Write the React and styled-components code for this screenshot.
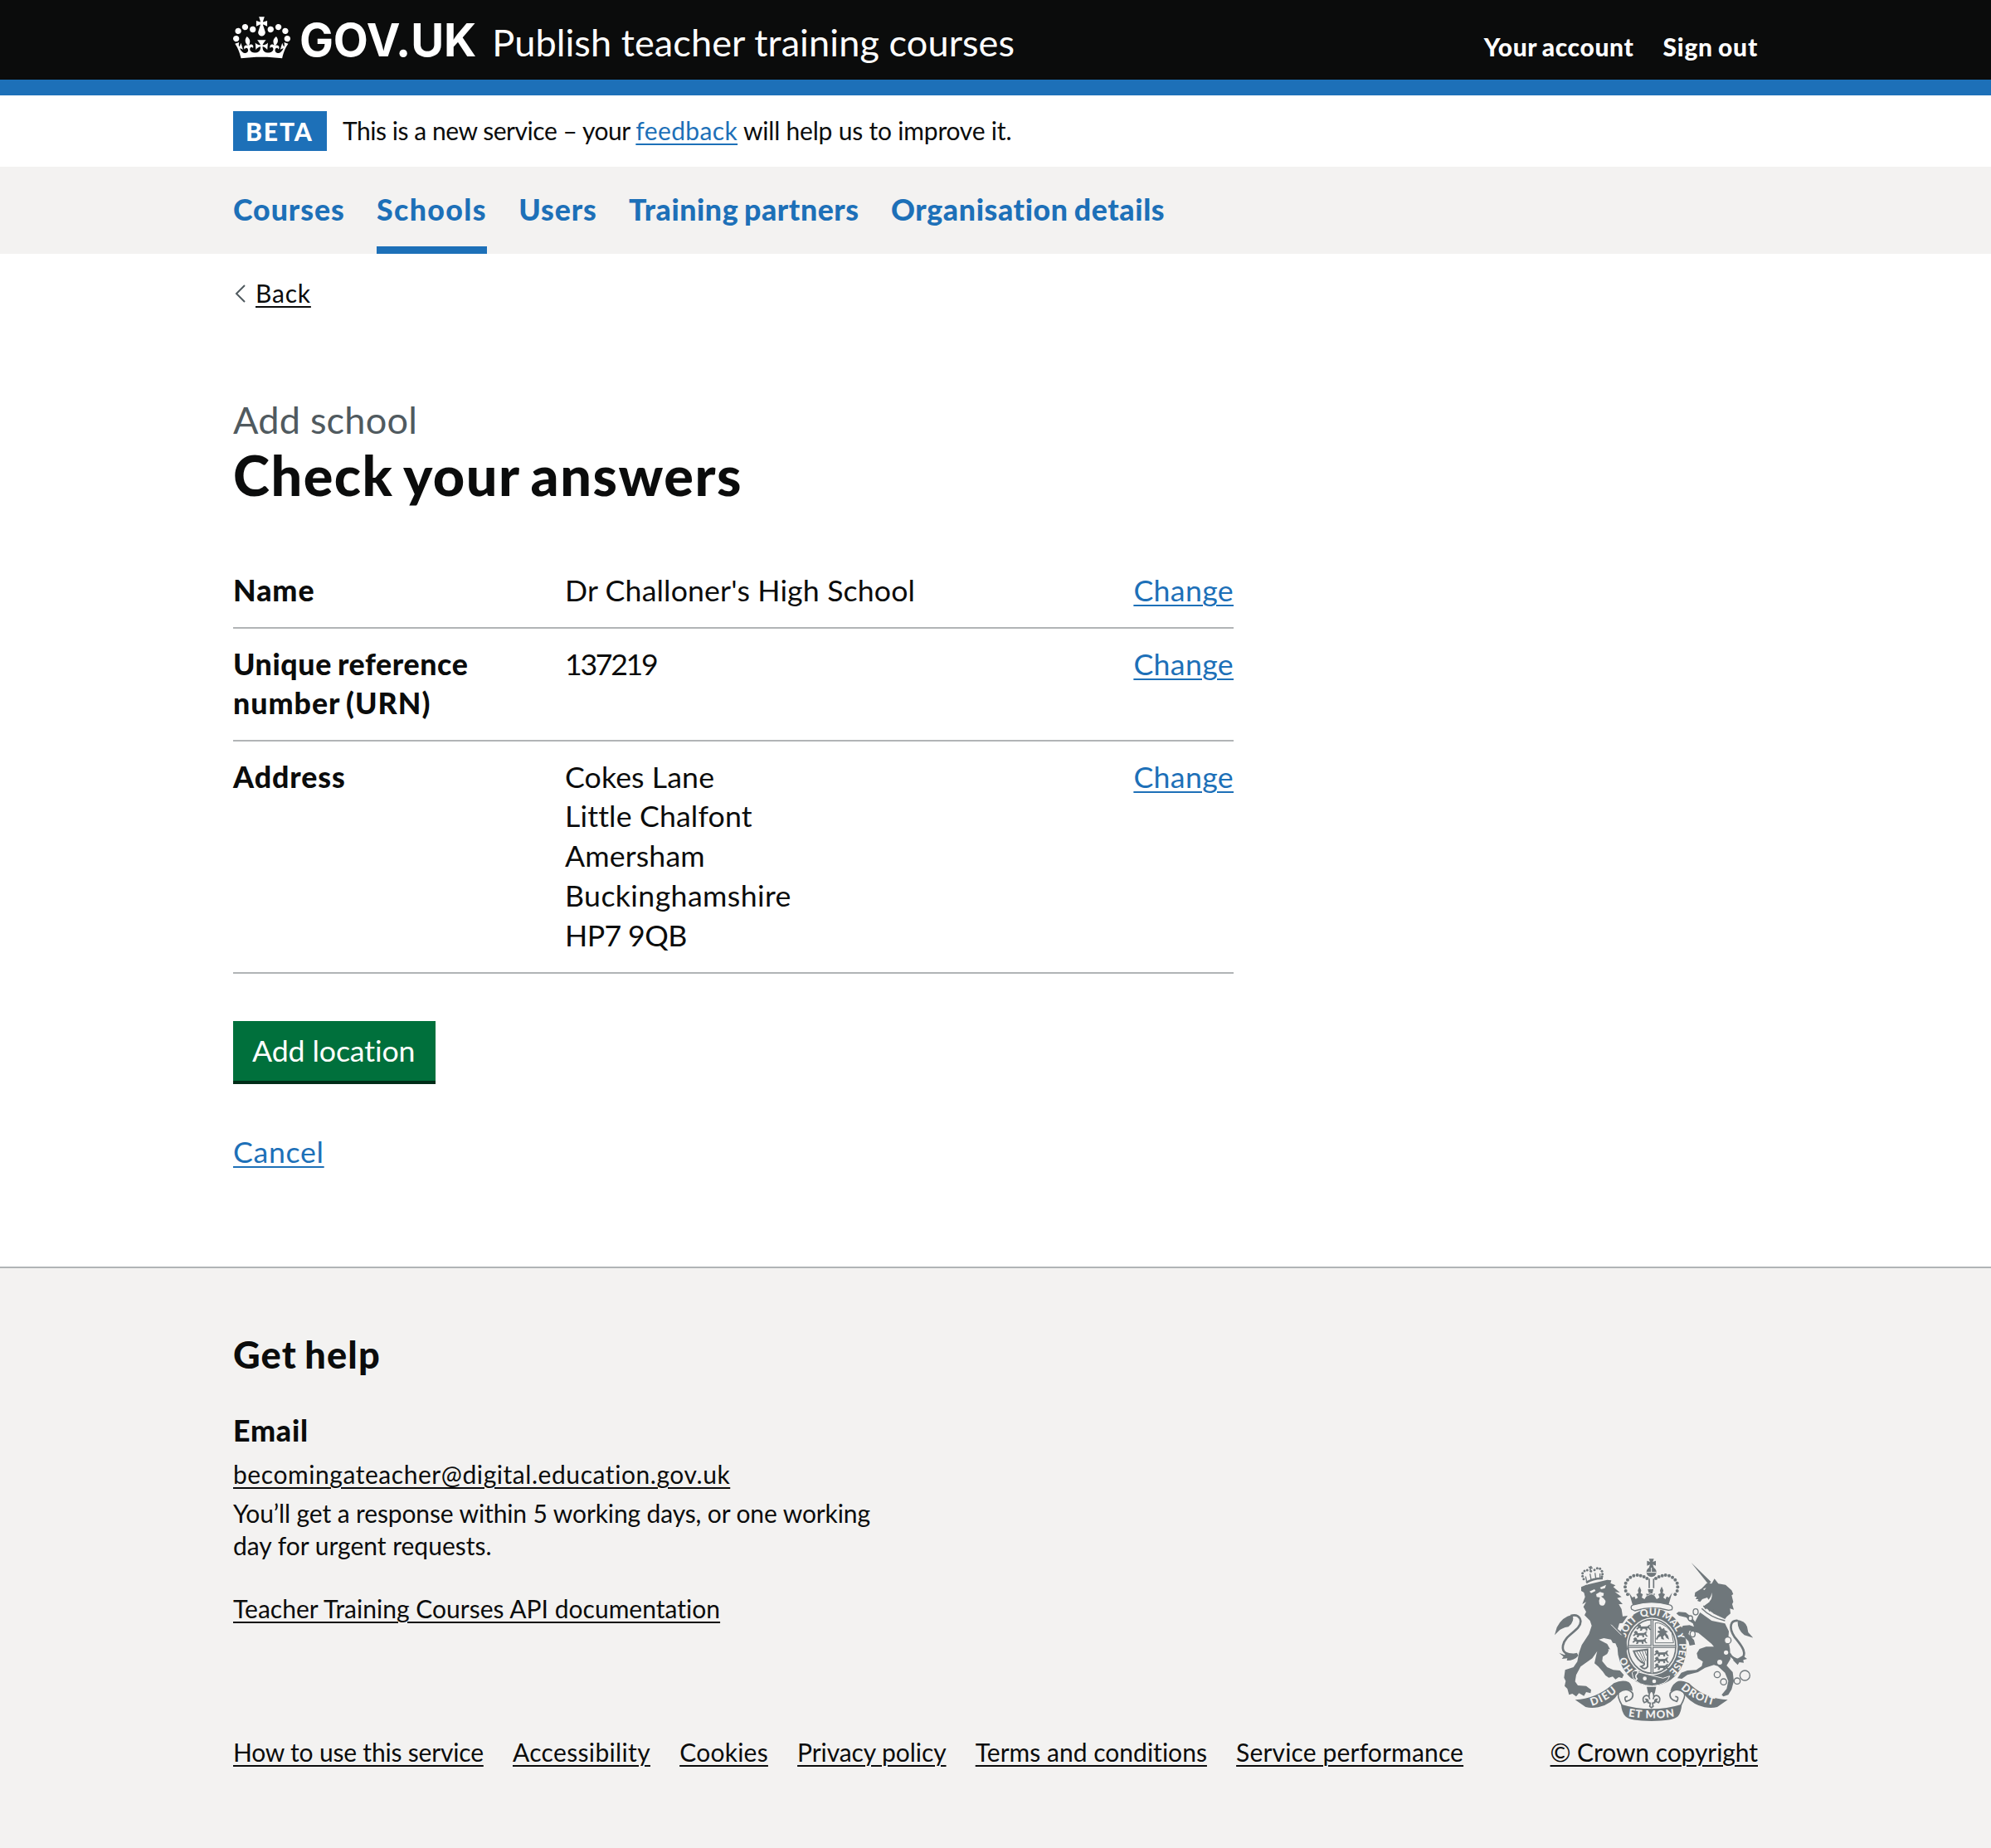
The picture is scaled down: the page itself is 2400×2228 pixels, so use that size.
import React from "react";
import styled, { createGlobalStyle } from "styled-components";

const ink = "#0b0c0c";
const blue = "#1d70b8";
const grey = "#f3f2f1";
const rule = "#b1b4b6";

const GlobalStyle = createGlobalStyle`
  *, *::before, *::after { box-sizing: border-box; }
  html { background: ${grey}; }
  body {
    margin: 0;
    background: #fff;
    color: ${ink};
    font-family: Lato, "Noto Sans", sans-serif;
    font-size: 35.7px;
    line-height: 47.9px;
    overflow-x: hidden;
  }
`;

const Container = styled.div`
  width: 1838px;
  margin: 0 auto;
`;

/* Inline run of text with its own tracking. */
const Run = styled.span`
  letter-spacing: ${(p) => p.$track ?? 0}px;
`;

const Link = styled.a`
  color: ${(p) => (p.$plain ? ink : blue)};
  letter-spacing: ${(p) => p.$track ?? 0}px;
  text-decoration: underline;
  text-decoration-thickness: 2px;
  text-underline-offset: 4px;
  white-space: nowrap;
`;

/* ---------- header ---------- */
const Header = styled.header`
  background: ${ink};
  border-bottom: 19px solid ${blue};
  height: 115px;
  color: #fff;
`;

const HeaderRow = styled(Container)`
  display: flex;
  align-items: baseline;
  padding-top: 20px;
  line-height: 57px;
`;

const Crown = styled.svg`
  width: 69px;
  height: 51px;
  align-self: flex-start;
  fill: currentColor;
`;

const Wordmark = styled.span`
  margin-left: 11px;
  font-family: Inter, "Liberation Sans", sans-serif;
  font-weight: 700;
  font-size: 54.6px;
  letter-spacing: -0.1px;
`;

const ServiceName = styled.span`
  margin-left: 19px;
  font-size: 45.1px;
  letter-spacing: 0.08px;
`;

const Account = styled.nav`
  display: flex;
  gap: 35px;
  margin-left: auto;
  font-size: 30px;
  font-weight: 900;
  word-spacing: -0.06em;
`;

/* ---------- phase banner ---------- */
const Banner = styled(Container)`
  display: flex;
  align-items: center;
  height: 86px;
  font-size: 30px;
  line-height: 38.3px;
`;

const Tag = styled.strong`
  width: 113px;
  height: 48px;
  padding: 5px 0 0 15px;
  background: ${blue};
  color: #fff;
  font-weight: 900;
  letter-spacing: 1.9px;
`;

const BannerText = styled.span`
  margin-left: 19px;
  padding-bottom: 1px;
  white-space: pre;
`;

/* ---------- primary navigation ---------- */
const NavBar = styled.nav`
  background: ${grey};
`;

const NavList = styled(Container)`
  display: flex;
  gap: 38.3px;
`;

const NavItem = styled.a`
  height: 105px;
  padding-top: 28px;
  border-bottom: 9.5px solid ${(p) => (p.$current ? blue : "transparent")};
  color: ${blue};
  font-weight: 900;
  letter-spacing: ${(p) => p.$track}px;
  word-spacing: -0.06em;
  white-space: nowrap;
`;

/* ---------- main ---------- */
const Main = styled(Container)`
  height: 1221px;
  padding-top: 27.5px;
`;

const BackLink = styled.div`
  display: flex;
  align-items: center;
  height: 38.3px;
  font-size: 30px;
  line-height: 38.3px;
`;

const Chevron = styled.svg`
  width: 13px;
  height: 22px;
  margin: 3px 12px 0 2px;
  fill: none;
  stroke: #505a5f;
  stroke-width: 2;
`;

const Caption = styled.div`
  margin-top: 105.7px;
  color: #505a5f;
  font-size: 45.1px;
  line-height: 57.4px;
  letter-spacing: 0.2px;
`;

const Title = styled.h1`
  margin: 1.5px 0 61.5px;
  font-size: 66.6px;
  font-weight: 900;
  line-height: 72px;
  letter-spacing: 1.5px;
  word-spacing: -0.06em;
`;

const Summary = styled.dl`
  width: 1206px;
  margin: 0 0 57.4px;
`;

const SummaryRow = styled.div`
  display: grid;
  grid-template-columns: 400px 1fr auto;
  padding: 18.6px 0 19.6px;
  border-bottom: 2px solid ${rule};
`;

const Key = styled.dt`
  font-weight: 900;
  word-spacing: -0.06em;
`;

const Value = styled.dd`
  margin: 0;
`;

const Line = styled.div`
  letter-spacing: ${(p) => p.$track ?? 0}px;
`;

const Button = styled.button`
  display: block;
  width: 244px;
  height: 72px;
  margin: 0 0 61.5px;
  padding: 0 0 0 23px;
  border: 0;
  background: #00703c;
  box-shadow: 0 4px 0 #002d18;
  color: #fff;
  font: inherit;
  letter-spacing: -0.1px;
  text-align: left;
  line-height: 47.9px;
`;

/* ---------- footer ---------- */
const Footer = styled.footer`
  height: 701px;
  border-top: 2px solid ${rule};
  background: ${grey};
  font-size: 30px;
  line-height: 38.3px;
`;

const FooterRow = styled(Container)`
  display: flex;
  justify-content: space-between;
  align-items: flex-end;
  padding-top: 75.4px;
`;

const HelpTitle = styled.h2`
  margin: 0 0 38.9px;
  font-size: 45.1px;
  font-weight: 900;
  line-height: 57.4px;
  letter-spacing: 1.2px;
  word-spacing: -0.06em;
`;

const HelpSub = styled.h3`
  margin: 0 0 9.6px;
  font-size: 35.7px;
  font-weight: 900;
  line-height: 47.9px;
  letter-spacing: 0.8px;
`;

const HelpText = styled.p`
  margin: 9px 0 38.4px;
`;

const FooterLinks = styled.div`
  display: flex;
  gap: 35.2px;
  margin-top: 134px;
`;

const Licence = styled.div`
  display: flex;
  flex-direction: column;
  align-items: flex-end;
`;

const CrestSvg = styled.svg`
  width: 239px;
  height: 196px;
  margin: 0 6px 17.5px 0;
`;

const crownPath =
  "M25 30.2c3.5 1.5 7.7-.2 9.1-3.7 1.5-3.6-.2-7.8-3.9-9.2-3.6-1.4-7.6.3-9.1 3.9-1.4 3.5.3 7.5 3.9 9zM9 39.5c3.6 1.5 7.8-.2 9.2-3.7 1.5-3.6-.2-7.8-3.9-9.1-3.6-1.5-7.6.2-9.1 3.8-1.4 3.5.3 7.5 3.8 9zM4.4 57.2c3.5 1.5 7.7-.2 9.1-3.8 1.5-3.6-.2-7.7-3.9-9.1-3.5-1.5-7.6.3-9.1 3.8-1.4 3.5.3 7.6 3.9 9.1zm38.3-21.4c3.5 1.5 7.7-.2 9.1-3.8 1.5-3.6-.2-7.7-3.9-9.1-3.6-1.5-7.6.3-9.1 3.8-1.3 3.6.4 7.7 3.9 9.1zm64.4-5.6c-3.6 1.5-7.8-.2-9.1-3.7-1.5-3.6.2-7.8 3.8-9.2 3.6-1.4 7.7.3 9.2 3.9 1.3 3.5-.4 7.5-3.9 9zm15.9 9.3c-3.6 1.5-7.7-.2-9.1-3.7-1.5-3.6.2-7.8 3.7-9.1 3.6-1.5 7.7.2 9.2 3.8 1.5 3.5-.3 7.5-3.8 9zm4.7 17.7c-3.6 1.5-7.8-.2-9.2-3.8-1.5-3.6.2-7.7 3.9-9.1 3.6-1.5 7.7.3 9.2 3.8 1.3 3.5-.4 7.6-3.9 9.1zM89.3 35.8c-3.6 1.5-7.8-.2-9.2-3.8-1.4-3.6.2-7.7 3.9-9.1 3.6-1.5 7.7.3 9.2 3.8 1.4 3.6-.3 7.7-3.9 9.1zM69.7 17.7l8.9 4.7V9.3l-8.9 2.8c-.2-.3-.5-.6-.9-.9L72.4 0H59.6l3.5 11.2c-.3.3-.6.5-.9.9l-8.8-2.8v13.1l8.8-4.7c.3.3.6.7.9.9l-5 15.4v.1c-.2.8-.4 1.6-.4 2.4 0 4.1 3.1 7.5 7 8.1h.2c.3 0 .7.1 1 .1.4 0 .7 0 1-.1h.2c4-.6 7.1-4.1 7.1-8.1 0-.8-.1-1.7-.4-2.4V34l-5.1-15.4c.4-.2.7-.6 1-.9zM66 92.8c16.9 0 32.8 1.1 47.1 3.2 4-16.9 8.9-26.7 14-33.5l-9.6-3.4c1 4.9 1.1 7.2 0 10.2-1.5-1.4-3-4.3-4.2-8.7L108.6 76c2.8-2 5-3.2 7.5-3.3-4.4 9.4-10 11.9-13.6 11.2-4.3-.8-6.3-4.6-5.6-7.9 1-4.7 5.7-5.9 8-.5 4.3-8.7-3-11.4-7.6-8.8 7.1-7.2 7.9-13.5 2.1-21.1-8 6.1-8.1 12.3-4.5 20.8-4.7-5.4-12.1-2.5-9.5 6.2 3.4-5.2 7.9-2 7.2 3.1-.6 4.3-6.4 7.8-13.5 7.2-10.3-.9-10.9-8-11.2-13.8 2.5-.5 7.1 1.8 11 7.3L80.2 60c-4.1 4.4-8 5.3-12.3 5.4 1.4-4.4 8-11.6 8-11.6H55.5s6.4 7.2 7.9 11.6c-4.2-.1-8-1-12.3-5.4l1.4 16.4c3.9-5.5 8.5-7.7 10.9-7.3-.3 5.8-.9 12.8-11.1 13.8-7.2.6-12.9-2.9-13.5-7.2-.7-5 3.8-8.3 7.1-3.1 2.7-8.7-4.6-11.6-9.4-6.2 3.7-8.5 3.6-14.7-4.6-20.8-5.8 7.6-5 13.9 2.2 21.1-4.7-2.6-11.9.1-7.7 8.8 2.3-5.5 7.1-4.2 8.1.5.7 3.3-1.3 7.1-5.7 7.9-3.5.7-9-1.8-13.5-11.2 2.5.1 4.7 1.3 7.5 3.3l-4.7-15.4c-1.2 4.4-2.7 7.2-4.3 8.7-1.1-3-.9-5.3 0-10.2l-9.5 3.4c5 6.9 9.9 16.7 14 33.5 14.8-2.1 30.8-3.2 47.7-3.2z";

const beads = [
  [336, 187], [329, 174], [327, 160], [329, 146], [336, 134], [346, 125],
  [358, 119], [371, 117], [383, 119], [395, 123], [406, 129],
];

const smallBeads = [
  [177, 131], [173, 121], [173, 110], [180, 102], [190, 99], [203, 103],
  [216, 98], [226, 92], [236, 94], [243, 103], [245, 113], [243, 122],
];

function Passant({ x, y }) {
  return (
    <path
      transform={`translate(${x} ${y})`}
      d="M0 4l7-6 6 3 2 6 22-1 8-6 5 2-5 3 1 8 6 6-6 1-6-7-3 1 1 7-6 1-2-7-10 0-3 7-7 0 3-7-5-3-7 6-4-3 7-7z"
    />
  );
}

/* Royal coat of arms with lion and unicorn supporters. */
function Crest() {
  const g = "#6f777b";
  return (
    <CrestSvg viewBox="72 57 717 588" fill={g} aria-hidden="true">
      <defs>
        <path id="garter" d="M424 490C369 490 325 438 325 375S369 262 424 262S523 312 523 375S479 490 424 490" />
        <path id="dieu" d="M206 590Q262 574 304 532" />
        <path id="mon" d="M338 628Q422 642 508 628" />
        <path id="droit" d="M528 528Q578 574 660 590" />
      </defs>

      {/* imperial crown */}
      <path d="M413 58h18l-4 11 11-4v18l-11-4 4 11h-18l4-11-11 4v-18l11 4z" />
      <circle cx="422" cy="106" r="18" />
      <path d="M404 107h36M422 90v16" stroke={grey} strokeWidth="3" />
      {beads.map(([x, y]) => (
        <g key={x + "-" + y}>
          <circle cx={x} cy={y} r="6" />
          <circle cx={844 - x} cy={y} r="6" />
        </g>
      ))}
      <path d="M414 130v34M430 130v34" stroke={g} strokeWidth="5" />
      <path d="M341 180l12 18 8-4 4 10 8-6-6-12 8-4-2-10 6-14 6 14-2 10 8 4-4 12 10 6 8-12-2-8 10 2-4-18h20l-4 18 10-2-2 8 8 12 10-6-4-12 8-4-2-10 6-14 6 14-2 10 8 4-6 12 8 6 4-10 8 4 12-18-14 48Q422 205 355 228z" />
      <path d="M404 177l36 16M440 177l-36 16" stroke={grey} strokeWidth="2" />

      {/* garter */}
      <ellipse cx="424" cy="378" rx="125" ry="140" />
      <ellipse cx="424" cy="375" rx="93" ry="104" fill={grey} />
      <ellipse cx="424" cy="375" rx="86" ry="97" fill={grey} stroke={g} strokeWidth="5" />
      <path d="M350 240Q344 226 360 224Q422 206 486 224Q502 228 496 242L484 244Q422 226 362 246z" fill={grey} stroke={g} strokeWidth="4" />
      <g fill={grey} fontFamily="Lato, sans-serif" fontWeight="900" fontSize="36" textAnchor="middle">
        <text><textPath href="#garter" startOffset="15.5%">HO</textPath></text>
        <text><textPath href="#garter" startOffset="35.5%">SOIT</textPath></text>
        <text><textPath href="#garter" startOffset="49%">QUI</textPath></text>
        <text><textPath href="#garter" startOffset="61%">MAL</textPath></text>
        <text><textPath href="#garter" startOffset="69.5%">Y</textPath></text>
        <text><textPath href="#garter" startOffset="81.5%">PENSE</textPath></text>
      </g>

      {/* quartered shield */}
      <path d="M340 375h168M424 278v194" stroke={g} strokeWidth="11" />
      <path d="M340 375h168M424 278v194" stroke={grey} strokeWidth="3" />
      <Passant x={370} y={296} />
      <Passant x={358} y={320} />
      <Passant x={356} y={344} />
      {[390, 414, 438].map((y) => (
        <Passant key={y} x={434} y={y} />
      ))}
      <path d="M436 290h12q30 8 48 36l6 36h-66z" fill="none" stroke={g} strokeWidth="3" />
      <path d="M446 306l8-4 6 10 8-4 2 8 12 6-8 4 8 10 4 14-10-6-6-10-6 6 4 10-10-2-2-10-8 4-6 10-4-4 6-12 8-8-8-4 2-6 8 0z" />
      <path d="M358 392l50-6v62q-10 14-24 0 14-4 12-12-24-6-38-44z" fill="none" stroke={g} strokeWidth="6" />
      <path d="M368 392l26 44M378 390l20 42M388 389l14 38M398 388l6 20" stroke={g} strokeWidth="3" />

      {/* belt buckle and badge */}
      <path d="M352 470q10-14 24-2l88 22 24-8q-8 32-64 36-50-2-68-30z" stroke={grey} strokeWidth="3" />
      <path d="M362 462q16-6 10 10-12 10-2 20-8 12-18 0" fill="none" stroke={grey} strokeWidth="5" />
      <circle cx="398" cy="491" r="7" fill={grey} />
      <circle cx="432" cy="501" r="7" fill={grey} />
      <path d="M405 521h34l-5 24h-24z" />
      <path d="M422 534q14 16 6 32 4-18 18-12 12 10 2 24l-10-4 4-8q-10 0-8 12l-8 2 2 12-6 4-6-4 2-12-8-2q2-12-8-12l4 8-10 4q-10-14 2-24 14-6 18 12-8-16 6-32z" fill={grey} stroke={g} strokeWidth="5" />

      {/* motto ribbon */}
      <path d="M146 568Q226 564 286 508Q316 494 340 504Q352 512 354 536Q330 526 306 540Q280 584 230 595Q204 600 184 594z" />
      <path d="M698 568Q614 564 558 508Q528 494 512 504Q494 516 490 538Q516 526 534 540Q566 584 614 595Q640 600 660 594z" />
      <path d="M312 584Q422 618 532 584Q530 612 518 628Q500 645 422 645Q344 645 328 628Q314 612 312 584z" />
      <path d="M318 592Q296 556 304 542Q332 520 354 544Q360 566 330 574Q320 556 336 556M526 592Q548 556 540 542Q512 520 490 544Q484 566 514 574Q524 556 508 556" fill="none" stroke={g} strokeWidth="5" />
      <g fill={grey} fontFamily="Lato, sans-serif" fontWeight="900" fontSize="39">
        <text><textPath href="#dieu" textLength="106">DIEU</textPath></text>
        <text><textPath href="#mon" textLength="168">ET MON</textPath></text>
        <text><textPath href="#droit" textLength="134">DROIT</textPath></text>
      </g>

      {/* lion */}
      <path d="M168 160L186 152L262 134L277 136L274 146L292 154L284 160L308 180L290 178L314 196L298 200L318 222L304 222L314 240L318 266L336 264L318 290L306 292L300 312L322 330L330 352L336 384L328 398L320 392L312 400L306 380L298 378L292 364L282 362L276 350L250 345L232 350L262 366L272 384L262 402L246 412L244 428L262 450L284 460L308 462L322 478L316 490L304 486L292 494L282 484L268 488L256 480L246 466L230 448L216 436L222 408L226 392L208 418L166 448L150 478L146 502L156 516L186 518L204 532L202 544L186 540L178 554L160 544L150 556L136 546L124 550L118 528L108 518L112 500L106 488L110 460L140 450L154 430L160 398L170 370L196 330L206 300L200 282L180 262L186 250L176 232L186 214L172 222L182 196L178 180L168 174z" />
      <path d="M198 176l18-8 4 6-16 8zM236 162l22-10-4 12-14 4zM222 186l14-8 14 4-2 10-8 2q24 14 12 30-10 8-18-2-4-12 2-24l-12-2z" fill={grey} />
      <path d="M276 296l38 38M268 384q2 16-10 24" stroke={grey} strokeWidth="3" fill="none" />
      {smallBeads.map(([x, y]) => (
        <circle key={x + "-" + y} cx={x} cy={y} r="4.5" />
      ))}
      <path d="M195 88l14 4M204 84l-4 16" stroke={g} strokeWidth="5" />
      <path d="M188 150Q214 134 246 134" fill="none" stroke={grey} strokeWidth="4" />
      <path d="M186 144Q212 128 246 129" fill="none" stroke={g} strokeWidth="8" />
      <path d="M188 140l-4-18M204 134l-4-22M221 129l-3-20M236 127l0-16" stroke={g} strokeWidth="4" />
      <path d="M154 404Q96 410 102 372C108 332 166 318 166 284Q162 256 130 264" fill="none" stroke={g} strokeWidth="8" />
      <path d="M72 334L80 306Q98 268 136 260Q146 284 122 304Q96 308 84 322z" />
      <path d="M88 398l20 8 6-8 16 8 22-8 6 10q-14 18-42 18l2-8-20 2 6-8z" />

      {/* unicorn */}
      <path d="M566 72l72 70-10 8z" />
      <path d="M580 180L604 165L622 146L640 148L650 130L664 148L690 152L712 172L718 186L712 190L718 214L714 222L720 242L706 238L708 256L694 268L688 276L650 258L610 230L632 214L624 198L606 204L598 214L588 210L592 204L582 204L586 196L578 194z" />
      <path d="M608 168l12-6-6 9zM640 180q-2 24-24 34l6 6q24-14 18-40z" fill={grey} />
      <path d="M604 238q34 34 84 44" fill="none" stroke={g} strokeWidth="4" />
      <path d="M610 228l8 10 6-8 8 16 10-6 6 14 12-4 4 12 16-2" fill="none" stroke={g} strokeWidth="4" />
      <path d="M598 252L640 282L688 292L702 320L700 350L706 384L708 420L694 444L716 468L720 500L712 530L700 550L682 556L676 550L694 528L700 500L688 470L662 446L648 442L616 452L590 468L552 478L532 492L516 490L530 470L552 462L584 460L604 446L608 430L590 418L586 400L596 384L620 376L648 376L640 366L614 344L592 326L560 318L556 330L576 352L580 368L560 372L556 356L544 344L528 312L536 300L560 298L576 304L572 292L560 284L548 270L522 264L512 256L520 250L546 252L566 268L580 286L590 266z" />
      <path d="M704 400Q716 424 744 424C776 400 742 366 722 340C700 306 708 280 734 282" fill="none" stroke={g} strokeWidth="8" />
      <path d="M728 278Q762 282 768 304L772 324L790 344L758 334Q732 314 734 284z" />
      <path d="M718 412l14 8 20-12 16 12-14 4 2 10-16-2-6 10-16-16z" />
      <g fill={grey} stroke={g} strokeWidth="4">
        <ellipse cx="582" cy="250" rx="9" ry="11" />
        <ellipse cx="563" cy="273" rx="8" ry="9" />
        <ellipse cx="571" cy="330" rx="9" ry="11" />
        <circle cx="698" cy="353" r="12" />
        <circle cx="692" cy="397" r="10" />
        <circle cx="669" cy="432" r="11" />
        <circle cx="660" cy="477" r="11" />
        <circle cx="683" cy="503" r="11" />
        <circle cx="732" cy="500" r="11" />
        <circle cx="760" cy="480" r="18" />
      </g>
    </CrestSvg>
  );
}

const navItems = [
  { label: "Courses", track: 0.95 },
  { label: "Schools", track: 1.39, current: true },
  { label: "Users", track: 0.9 },
  { label: "Training partners", track: 0.56 },
  { label: "Organisation details", track: 0.63 },
];

const rows = [
  {
    key: [["Name", 0.95]],
    value: [["Dr Challoner's High School", 0.15]],
  },
  {
    key: [["Unique reference", 0.62], ["number (URN)", 1]],
    value: [["137219", -2.3]],
  },
  {
    key: [["Address", 0.95]],
    value: [
      ["Cokes Lane", 0.1],
      ["Little Chalfont", 0.15],
      ["Amersham", 0.15],
      ["Buckinghamshire", 0.4],
      ["HP7 9QB", -0.6],
    ],
  },
];

const footerLinks = [
  ["How to use this service", -0.19],
  ["Accessibility", 0.34],
  ["Cookies", 0.25],
  ["Privacy policy", -0.08],
  ["Terms and conditions", 0.02],
  ["Service performance", 0.16],
];

const lines = (items) =>
  items.map(([text, track]) => (
    <Line key={text} $track={track}>
      {text}
    </Line>
  ));

export default function App() {
  return (
    <>
      <GlobalStyle />
      <Header>
        <HeaderRow>
          <Crown viewBox="0 0 132 97" aria-hidden="true">
            <path d={crownPath} />
          </Crown>
          <Wordmark>GOV.UK</Wordmark>
          <ServiceName>Publish teacher training courses</ServiceName>
          <Account>
            <Run $track={0.65}>Your account</Run>
            <Run $track={0.78}>Sign out</Run>
          </Account>
        </HeaderRow>
      </Header>

      <Banner>
        <Tag>BETA</Tag>
        <BannerText>
          <Run $track={-0.46}>{"This is a new service – your "}</Run>
          <Link $track={0.37}>feedback</Link>
          <Run $track={-0.2}>{" will help us to improve it."}</Run>
        </BannerText>
      </Banner>

      <NavBar>
        <NavList>
          {navItems.map((item) => (
            <NavItem key={item.label} $track={item.track} $current={item.current}>
              {item.label}
            </NavItem>
          ))}
        </NavList>
      </NavBar>

      <Main as="main">
        <BackLink>
          <Chevron viewBox="0 0 13 22">
            <path d="M12 1L2 11l10 10" />
          </Chevron>
          <Link $plain $track={0.8}>Back</Link>
        </BackLink>
        <Caption>Add school</Caption>
        <Title>Check your answers</Title>
        <Summary>
          {rows.map((row) => (
            <SummaryRow key={row.key[0][0]}>
              <Key>{lines(row.key)}</Key>
              <Value>{lines(row.value)}</Value>
              <Value>
                <Link $track={0.35}>Change</Link>
              </Value>
            </SummaryRow>
          ))}
        </Summary>
        <Button>Add location</Button>
        <Link $track={0.7}>Cancel</Link>
      </Main>

      <Footer>
        <FooterRow>
          <div>
            <HelpTitle>Get help</HelpTitle>
            <HelpSub>Email</HelpSub>
            <Link $plain $track={0.56}>becomingateacher@digital.education.gov.uk</Link>
            <HelpText>
              <Line $track={-0.12}>You’ll get a response within 5 working days, or one working</Line>
              <Line>day for urgent requests.</Line>
            </HelpText>
            <Link $plain $track={0.02}>Teacher Training Courses API documentation</Link>
            <FooterLinks>
              {footerLinks.map(([text, track]) => (
                <Link key={text} $plain $track={track}>
                  {text}
                </Link>
              ))}
            </FooterLinks>
          </div>
          <Licence>
            <Crest />
            <Link $plain $track={-0.07}>© Crown copyright</Link>
          </Licence>
        </FooterRow>
      </Footer>
    </>
  );
}
